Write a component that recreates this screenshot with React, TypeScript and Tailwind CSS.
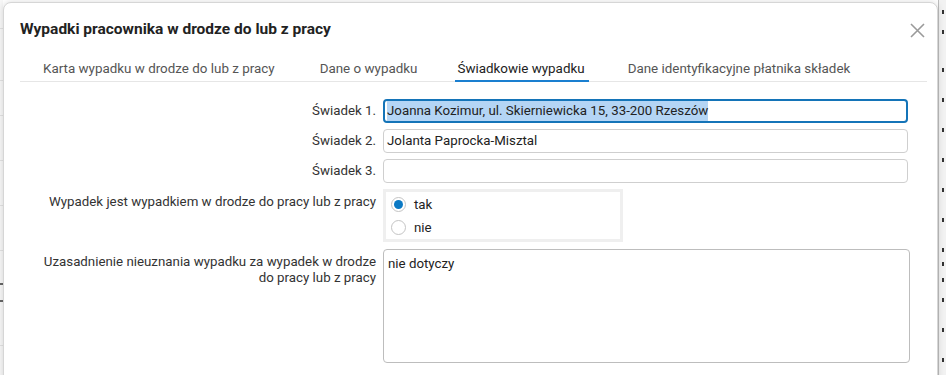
import React from "react";

const marksRight = [10, 30, 68, 98, 128, 158, 188, 218, 248, 262, 278, 298, 328, 358];
const marksLeft = [28, 80, 115, 160, 205, 250, 300, 345];

export default function App() {
  return (
    <div className="relative w-[946px] h-[375px] overflow-hidden bg-white" style={{ fontFamily: "Roboto, 'Liberation Sans', sans-serif" }}>
      {/* background page fragments */}
      <div className="absolute left-0 top-0 w-[3px] h-full bg-[#f7f7f7]">
        {marksLeft.map((y) => (
          <div key={y} className="absolute left-0 w-[3px] h-px bg-[#e2e2e2]" style={{ top: y }} />
        ))}
        <div className="absolute left-0 top-[283px] w-[3px] h-[2px] bg-[#666]" />
        <div className="absolute left-0 top-[300px] w-[3px] h-[2px] bg-[#666]" />
      </div>
      <div className="absolute right-0 top-0 w-[8px] h-full bg-[#f2f2f2] border-l border-[#bdbdbd]">
        {marksRight.map((y) => (
          <div key={y} className="absolute left-[3px] w-[2px] h-[4px] bg-[#333]" style={{ top: y }} />
        ))}
      </div>

      {/* modal */}
      <div className="absolute left-[3px] top-[2px] w-[935px] h-[400px] bg-white border border-[#d6d6d6] rounded-t-[8px] shadow-[0_0_6px_rgba(0,0,0,0.15)] px-[16px]">
        <div className="flex items-center justify-between h-[54px]">
          <h1 className="text-[15.5px] font-bold text-[#222] leading-none">Wypadki pracownika w drodze do lub z pracy</h1>
          <svg width="15" height="15" viewBox="0 0 15 15" className="mr-[-4px]">
            <path d="M1 1 L14 14 M14 1 L1 14" stroke="#9a9a9a" strokeWidth="1.6" />
          </svg>
        </div>
        <div className="flex h-[25px] border-b border-[#e6e6e6] text-[13.4px] leading-none mr-[-6px]">
          <div className="ml-[23px] text-[#555] pt-[5px]">Karta wypadku w drodze do lub z pracy</div>
          <div className="ml-[45px] text-[#555] pt-[5px]">Dane o wypadku</div>
          <div className="ml-[38px] text-[#222] pt-[5px] relative">
            <span className="px-[2px]">Świadkowie wypadku</span>
            <div className="absolute left-0 right-[-2px] bottom-[-1px] h-[2px] bg-[#1a7fd0]" />
          </div>
          <div className="ml-[41px] text-[#555] pt-[5px]">Dane identyfikacyjne płatnika składek</div>
        </div>

        <div className="pt-[17px] grid grid-cols-[356px_1fr] gap-x-[7px] gap-y-[6px] text-[13.3px] text-[#333] pr-[13px]">
          <label className="text-right self-center">Świadek 1.</label>
          <div className="h-[24px] border-2 border-[#1474b8] rounded-[4px] flex items-center px-[2px] text-[#222]">
            <span className="bg-[#b4d5f5]">Joanna Kozimur, ul. Skierniewicka 15, 33-200 Rzeszów</span>
          </div>

          <label className="text-right self-center">Świadek 2.</label>
          <div className="h-[24px] border border-[#cfcfcf] rounded-[4px] flex items-center px-[3px] text-[#222]">Jolanta Paprocka-Misztal</div>

          <label className="text-right self-center">Świadek 3.</label>
          <div className="h-[24px] border border-[#cfcfcf] rounded-[4px]" />

          <label className="text-right pt-[3px]">Wypadek jest wypadkiem w drodze do pracy lub z pracy</label>
          <div className="w-[240px] h-[53px] border-[3px] border-[#efefef] flex flex-col justify-start pt-[5px] gap-[8px] pl-[5px] text-[#222]">
            <div className="flex items-center gap-[8px] leading-none">
              <span className="w-[15px] h-[15px] rounded-full border border-[#c4c4c4] flex items-center justify-center">
                <span className="w-[9px] h-[9px] rounded-full bg-[#0b79c4]" />
              </span>
              tak
            </div>
            <div className="flex items-center gap-[8px] leading-none">
              <span className="w-[15px] h-[15px] rounded-full border border-[#c4c4c4]" />
              nie
            </div>
          </div>

          <label className="text-right leading-[16px] pt-[5px] mt-[1px]">
            Uzasadnienie nieuznania wypadku za wypadek w drodze
            <br />
            do pracy lub z pracy
          </label>
          <div className="h-[114px] mt-[1px] mr-[-2px] border border-[#bdbdbd] rounded-[4px] px-[4px] pt-[4px] text-[#222]">nie dotyczy</div>
        </div>
      </div>
    </div>
  );
}
